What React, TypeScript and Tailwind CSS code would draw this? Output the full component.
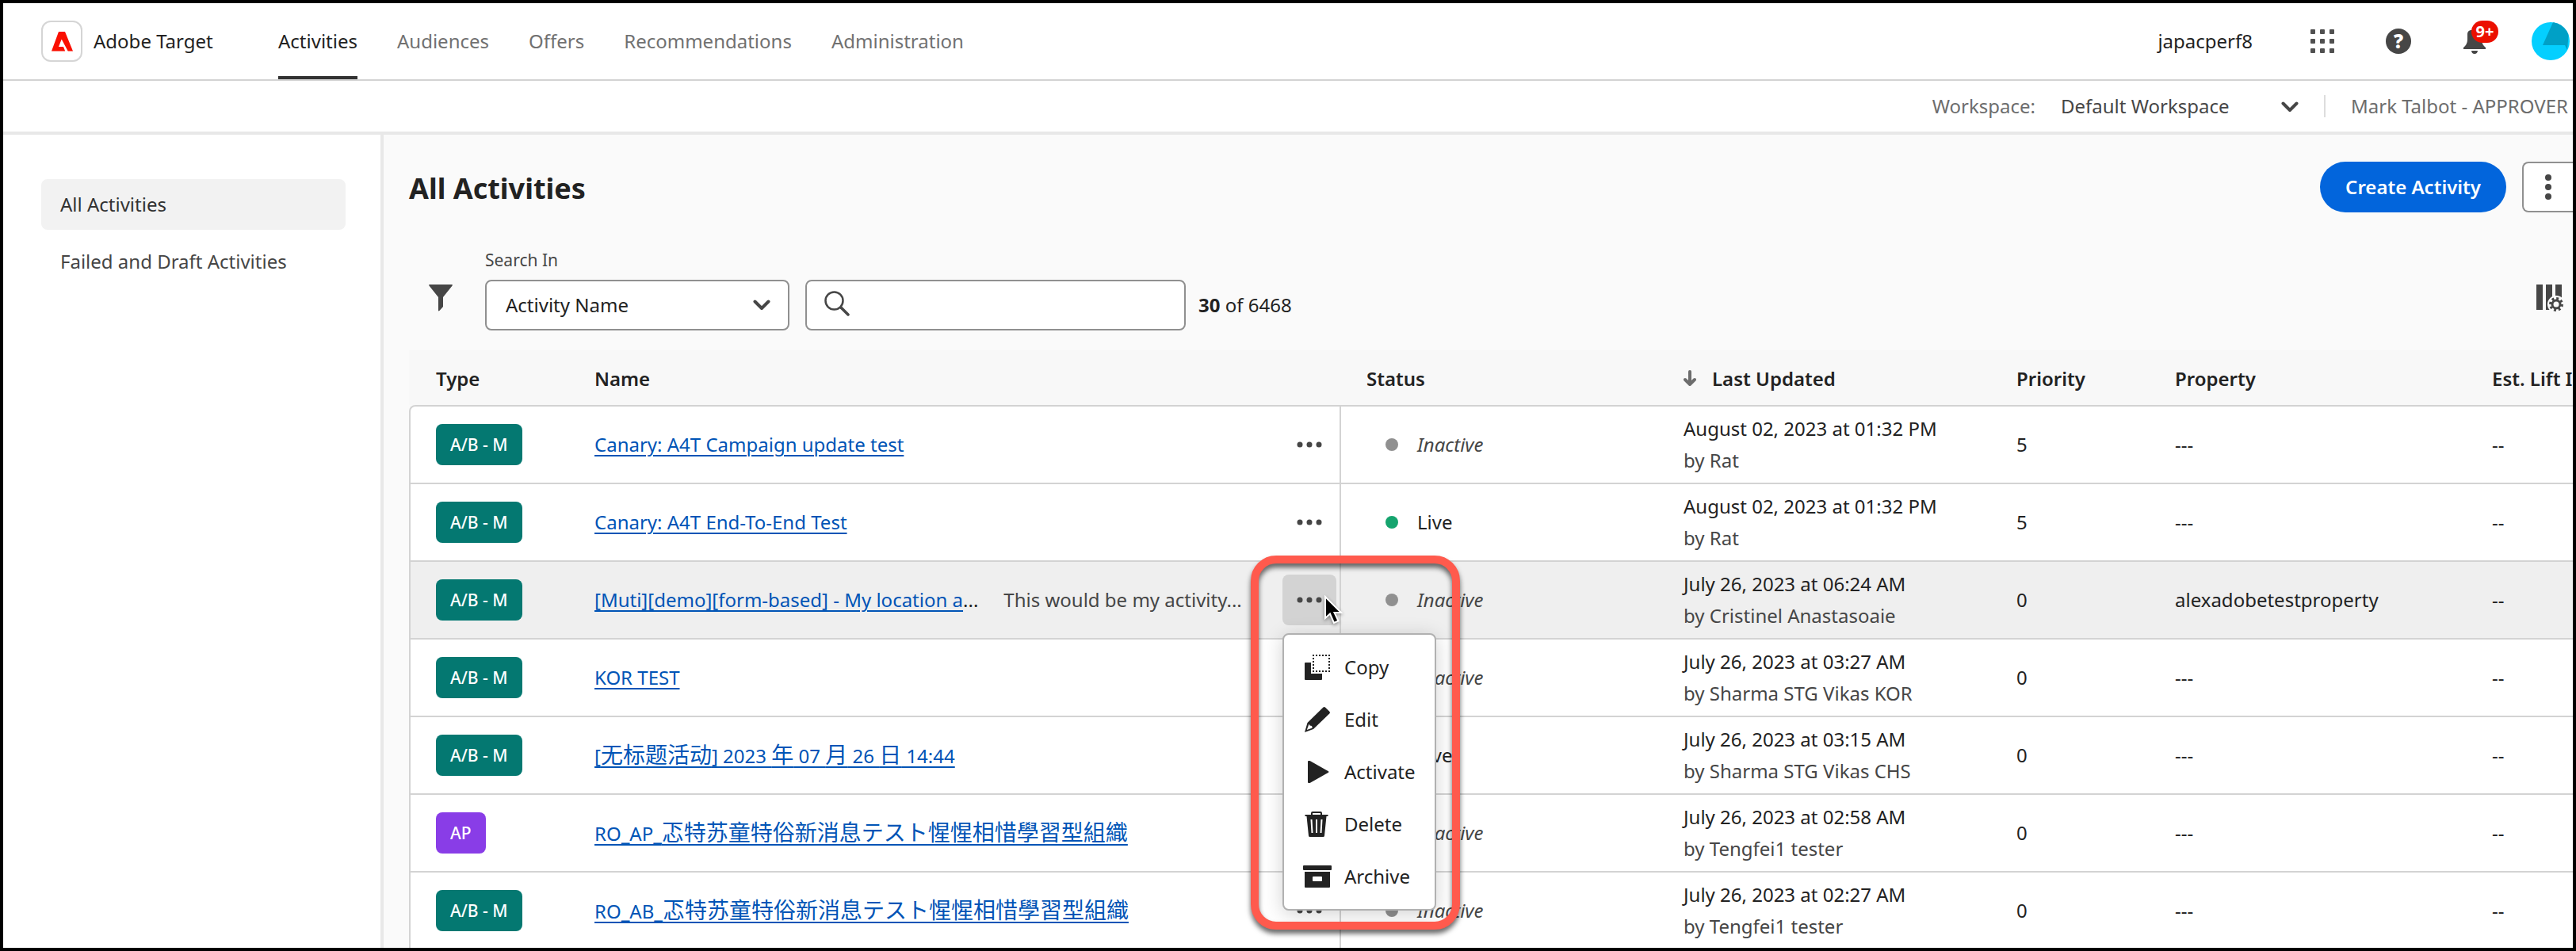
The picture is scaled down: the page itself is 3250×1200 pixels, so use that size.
import type { ReactNode } from "react";

type Status = "Inactive" | "Live";

interface Activity {
  type: "A/B - M" | "AP";
  name: string;
  clipped?: boolean;
  description?: string;
  status: Status;
  date: string;
  author: string;
  priority: number;
  property?: string;
}

const activities: Activity[] = [
  { type: "A/B - M", name: "Canary: A4T Campaign update test", status: "Inactive", date: "August 02, 2023 at 01:32 PM", author: "Rat", priority: 5 },
  { type: "A/B - M", name: "Canary: A4T End-To-End Test", status: "Live", date: "August 02, 2023 at 01:32 PM", author: "Rat", priority: 5 },
  { type: "A/B - M", name: "[Muti][demo][form-based] - My location a", clipped: true, description: "This would be my activity...", status: "Inactive", date: "July 26, 2023 at 06:24 AM", author: "Cristinel Anastasoaie", priority: 0, property: "alexadobetestproperty" },
  { type: "A/B - M", name: "KOR TEST", status: "Inactive", date: "July 26, 2023 at 03:27 AM", author: "Sharma STG Vikas KOR", priority: 0 },
  { type: "A/B - M", name: "[无标题活动] 2023 年 07 月 26 日 14:44", status: "Live", date: "July 26, 2023 at 03:15 AM", author: "Sharma STG Vikas CHS", priority: 0 },
  { type: "AP", name: "RO_AP_忑特苏童特俗新消息テスト惺惺相惜學習型組織", status: "Inactive", date: "July 26, 2023 at 02:58 AM", author: "Tengfei1 tester", priority: 0 },
  { type: "A/B - M", name: "RO_AB_忑特苏童特俗新消息テスト惺惺相惜學習型組織", status: "Inactive", date: "July 26, 2023 at 02:27 AM", author: "Tengfei1 tester", priority: 0 },
];

const OPEN_ROW = 2;

function Chevron({ className }: { className: string }) {
  return (
    <svg viewBox="0 0 22 14" className={className} fill="none" stroke="#464646" strokeWidth="4" strokeLinecap="round" strokeLinejoin="round" aria-hidden="true">
      <path d="M2.5 2.5 11 11l8.500-8.500" />
    </svg>
  );
}

function Dots() {
  return (
    <svg viewBox="0 0 32 8" className="h-2 w-8" fill="#464646" aria-hidden="true">
      <circle cx="4" cy="4" r="3.500" />
      <circle cx="16" cy="4" r="3.500" />
      <circle cx="28" cy="4" r="3.500" />
    </svg>
  );
}

/* East Asian runs are set a little larger than the Latin text beside them. */
function MixedText({ text }: { text: string }) {
  return (
    <>
      {text.split(/([\u3040-\u30ff\u4e00-\u9fff]+)/).map((part, i) =>
        i % 2 ? (
          <span key={i} className="text-[28px]">
            {part}
          </span>
        ) : (
          part
        ),
      )}
    </>
  );
}

const menuItems: { label: string; icon: ReactNode }[] = [
  {
    label: "Copy",
    icon: (
      <>
        <path d="M2 13q0-1 1-1h7v14h14v7q0 1-1 1H3q-1 0-1-1z" />
        <rect x="13" y="3" width="20" height="20" fill="none" stroke="#222" strokeWidth="2" strokeDasharray="2 2" strokeDashoffset="1" />
      </>
    ),
  },
  {
    label: "Edit",
    icon: (
      <path fillRule="evenodd" d="M25.500 2.500q1.200-1 2.400 0l5.600 5.400q1 1.200 0 2.300L13 30 2 34l3.500-12zM7.500 23.500 4.800 31l7-2.500-.8-2.500-2.500-.5z" />
    ),
  },
  { label: "Activate", icon: <path d="M6 5q0-1 1-1h1.500L9.500 4.500 32 17.300q1 .7 0 1.400L9.500 31.500 8.500 32H7q-1 0-1-1z" /> },
  {
    label: "Delete",
    icon: (
      <>
        <path d="M11 6V4q0-1 1-1h10q1 0 1 1v2" fill="none" stroke="#222" strokeWidth="2" />
        <path fillRule="evenodd" d="M2.500 6h29v2h-2L27 32.500q-.2 1.500-1.500 1.500h-17Q7.200 34 7 32.500L4.500 8h-2zM9.500 12l1 17h2l-1-17zm6.500 0v17h2V12zm6.500 0-1 17h2l1-17z" />
      </>
    ),
  },
  {
    label: "Archive",
    icon: (
      <>
        <rect x="0" y="4" width="36" height="6" rx="1" />
        <path fillRule="evenodd" d="M2 12h32v19q0 1-1 1H3q-1 0-1-1zM13 18q-1 0-1 1v4q0 1 1 1h10q1 0 1-1v-4q0-1-1-1z" />
      </>
    ),
  },
];

function RowMenu() {
  return (
    <div role="menu" className="absolute left-0 top-full z-20 mt-2.5 w-[194px] rounded-lg border-2 border-[#b1b1b1] bg-white py-2 shadow-[0_4px_24px_rgba(0,0,0,0.18)]">
      {menuItems.map((item) => (
        <button key={item.label} type="button" role="menuitem" className="flex h-[66px] w-full items-center gap-4 pl-6 text-left text-[#222222]">
          <svg viewBox="0 0 36 36" className="h-9 w-9 shrink-0" fill="#222" aria-hidden="true">
            {item.icon}
          </svg>
          {item.label}
        </button>
      ))}
    </div>
  );
}

function ActivityRow({ activity, index }: { activity: Activity; index: number }) {
  const open = index === OPEN_ROW;
  const cell = "border-t-2 border-[#d3d3d3] p-0 align-middle pl-8";
  return (
    <tr className={open ? "h-[98px] bg-[#efefef]" : "h-[98px] bg-white"}>
      <td className={`${cell} border-l-2 ${index === 0 ? "rounded-tl-lg" : ""}`}>
        <span className={`inline-flex h-[52px] items-center rounded-lg px-[18px] text-[21px] font-medium text-white ${activity.type === "AP" ? "bg-[#893de7]" : "bg-[#047871]"}`}>
          {activity.type}
        </span>
      </td>
      <td className={`${cell} border-r-2 pr-1`}>
        <div className="flex items-center">
          <div className="flex min-w-0 flex-1 items-center gap-8 whitespace-nowrap">
            <span>
              <a href="#activity" className="leading-9 text-[#0054b6] underline decoration-2 underline-offset-4">
                <MixedText text={activity.name} />
              </a>
              {activity.clipped && "..."}
            </span>
            {activity.description && <span className="text-[#464646]">{activity.description}</span>}
          </div>
          <div className="relative">
            <button type="button" aria-label="More actions" aria-expanded={open} className={`flex h-16 w-[68px] items-center justify-center rounded-lg ${open ? "bg-[#d3d3d3]" : ""}`}>
              <Dots />
            </button>
            {open && (
              <>
                <RowMenu />
                <div className="pointer-events-none absolute -left-10 -top-6 z-30 h-[472px] w-[264px] rounded-[32px] border-[10px] border-[#ff5a4d] drop-shadow-[0_5px_3px_rgba(0,0,0,0.6)]" />
                <svg viewBox="0 0 24 38" className="pointer-events-none absolute left-[52px] top-[26px] z-30 h-[38px] w-6 drop-shadow-[0_2px_2px_rgba(0,0,0,0.4)]" aria-hidden="true">
                  <path d="M2 2v27l6-5.500 5 11.500 5.500-2.500-5-10.500H22z" fill="#000" stroke="#fff" strokeWidth="2" />
                </svg>
              </>
            )}
          </div>
        </div>
      </td>
      <td className={cell}>
        <span className="flex items-center pl-6">
          <span className={`mr-6 h-4 w-4 rounded-full ${activity.status === "Live" ? "bg-[#15a46e]" : "bg-[#909090]"}`} />
          <span className={activity.status === "Live" ? "" : "italic text-[#464646]"}>{activity.status}</span>
        </span>
      </td>
      <td className={`${cell} whitespace-nowrap leading-10`}>
        {activity.date}
        <div className="text-[#464646]">by {activity.author}</div>
      </td>
      <td className={cell}>{activity.priority}</td>
      <td className={cell}>{activity.property ?? "---"}</td>
      <td className={cell}>--</td>
    </tr>
  );
}

function Header() {
  const links = ["Activities", "Audiences", "Offers", "Recommendations", "Administration"];
  return (
    <header className="flex h-[98px] shrink-0 items-center border-b-2 border-[#d3d3d3] pl-12 pr-1">
      <div className="flex h-[52px] w-[52px] items-center justify-center rounded-xl border-2 border-[#d5d5d5]">
        <svg viewBox="0 0 27 25" className="h-[25px] w-[27px]" fill="#fa0f00" aria-hidden="true">
          <path d="M9 0h8l10 24.500h-6.300L12.700 9.500 9 19h6l2.200 5.500H0z" />
        </svg>
      </div>
      <span className="ml-3.5 w-[233px]">Adobe Target</span>
      <nav className="flex gap-[50px] self-stretch">
        {links.map((link, i) => (
          <a key={link} href="#nav" className={`flex items-center border-b-4 pt-1 ${i === 0 ? "border-[#323232]" : "border-transparent text-[#717171]"}`}>
            {link}
          </a>
        ))}
      </nav>
      <div className="ml-auto flex items-center gap-12">
        <span className="mr-4">japacperf8</span>
        <button type="button" aria-label="Apps" className="flex h-12 w-12 items-center justify-center">
          <svg viewBox="0 0 30 30" className="h-[30px] w-[30px]" fill="#505050" aria-hidden="true">
            {[0, 12, 24].map((y) => [0, 12, 24].map((x) => <rect key={`${x}-${y}`} x={x} y={y} width="6" height="6" rx="1" />))}
          </svg>
        </button>
        <button type="button" aria-label="Help" className="flex h-12 w-12 items-center justify-center">
          <span className="flex h-8 w-8 items-center justify-center rounded-full bg-[#464646] font-black text-white">?</span>
        </button>
        <button type="button" aria-label="Notifications" className="relative flex h-12 w-12 items-center justify-center">
          <svg viewBox="0 0 28 32" className="h-8 w-7" fill="#464646" aria-hidden="true">
            <path d="M9 2h10q4 1 4 5v7q0 6 5 10v2H0v-2q5-4 5-10V7q0-4 4-5zM10 28h8q-.5 4-4 4t-4-4z" />
          </svg>
          <span className="absolute -top-0.5 left-5 flex h-7 w-[34px] items-center justify-center rounded-full bg-[#eb1000] text-xl font-bold text-white">9+</span>
        </button>
        <button type="button" aria-label="Account" className="h-12 w-12 overflow-hidden rounded-full bg-[#04cfff]">
          <svg viewBox="0 0 48 48" className="h-12 w-12" aria-hidden="true">
            <path d="M27 0 14 29h28l3 6 3-35z" fill="#00a0c6" />
          </svg>
        </button>
      </div>
    </header>
  );
}

export default function App() {
  return (
    <div className="flex h-screen flex-col overflow-hidden border-4 border-black bg-white font-['Noto_Sans','Noto_Sans_CJK_SC',sans-serif] text-2xl leading-8 text-[#222222]">
      <Header />
      <div className="flex h-[68px] shrink-0 items-center justify-end gap-8 border-b-4 border-[#e8e8e8] text-[#6d6d6d]">
        <label htmlFor="workspace">Workspace:</label>
        <div className="relative">
          <select id="workspace" className="w-[300px] appearance-none bg-transparent text-[#464646]">
            <option>Default Workspace</option>
          </select>
          <Chevron className="pointer-events-none absolute right-0 top-2.5 h-3.5 w-[22px]" />
        </div>
        <div className="h-7 w-0.5 bg-[#dddddd]" />
        <span className="w-[280px] overflow-hidden whitespace-nowrap">Mark Talbot - APPROVER</span>
      </div>

      <div className="flex min-h-0 flex-1">
        <aside className="flex w-[480px] shrink-0 flex-col gap-2 border-r-4 border-[#e8e8e8] pl-12 pr-11 pt-14">
          <a href="#all" className="flex h-16 items-center rounded-lg bg-[#f2f2f2] px-6 text-[#323232]">
            All Activities
          </a>
          <a href="#drafts" className="flex h-16 items-center whitespace-nowrap px-6 text-[#464646]">
            Failed and Draft Activities
          </a>
        </aside>

        <main className="min-w-0 flex-1 overflow-hidden bg-[#fafafa] pl-8 pt-[34px]">
          <div className="flex items-center">
            <h1 className="mr-auto pt-1 text-4xl font-bold">All Activities</h1>
            <button type="button" className="h-16 rounded-full bg-[#0265dc] px-8 font-semibold text-white">
              Create Activity
            </button>
            <button type="button" aria-label="More options" className="ml-5 flex h-16 w-16 items-center justify-center rounded-l-lg border-2 border-r-0 border-[#909090] bg-white">
              <svg viewBox="0 0 8 32" className="h-8 w-2" fill="#464646" aria-hidden="true">
                <circle cx="4" cy="4" r="4" />
                <circle cx="4" cy="16" r="4" />
                <circle cx="4" cy="28" r="4" />
              </svg>
            </button>
          </div>

          <div className="mt-11 flex items-end">
            <button type="button" aria-label="Filter" className="mb-[9px] ml-2 mr-6 flex h-16 w-16 items-center justify-center">
              <svg viewBox="0 0 32 34" className="h-[34px] w-8" fill="#464646" aria-hidden="true">
                <path d="M2 0h28q1.500 0 .6 1.400L19 16v12l-4.500 5Q13 34 13 32.500V16L1.400 1.400Q.5 0 2 0z" />
              </svg>
            </button>
            <div>
              <label htmlFor="search-in" className="mb-[9px] block text-[21px] text-[#464646]">
                Search In
              </label>
              <div className="relative">
                <select id="search-in" className="h-16 w-[384px] appearance-none rounded-lg border-2 border-[#909090] bg-white px-6">
                  <option>Activity Name</option>
                </select>
                <Chevron className="pointer-events-none absolute right-6 top-[25px] h-3.5 w-[22px]" />
              </div>
            </div>
            <div className="relative ml-5">
              <input type="search" aria-label="Search activities" className="block h-16 w-[480px] rounded-lg border-2 border-[#909090] bg-white pl-16" />
              <svg viewBox="0 0 32 32" className="pointer-events-none absolute left-6 top-[14px] h-8 w-8" fill="none" stroke="#464646" strokeLinecap="round" aria-hidden="true">
                <circle cx="12.500" cy="12.500" r="11" strokeWidth="2.500" />
                <path d="m21 21 9 9" strokeWidth="3.500" />
              </svg>
            </div>
            <p className="ml-4 flex h-16 items-center whitespace-pre">
              <b>30</b> of 6468
            </p>
            <button type="button" aria-label="Customize table" className="mb-[9px] ml-auto flex h-16 w-[58px] items-center justify-center">
              <svg viewBox="0 0 34 34" className="h-[34px] w-[34px]" aria-hidden="true">
                <path d="M0 0h8v32H0zM12 0h8v32h-8zM24 0h8v32h-8z" fill="#464646" />
                <circle cx="25" cy="25" r="11" fill="#fafafa" />
                <circle cx="25" cy="25" r="5" fill="none" stroke="#464646" strokeWidth="3" />
                <circle cx="25" cy="25" r="7.500" fill="none" stroke="#464646" strokeWidth="3" strokeDasharray="2.900 2.990" />
              </svg>
            </button>
          </div>

          <table className="mt-[25px] w-full table-fixed border-separate border-spacing-0">
            <colgroup>
              <col className="w-[202px]" />
              <col />
              <col className="w-[400px]" />
              <col className="w-[420px]" />
              <col className="w-[200px]" />
              <col className="w-[400px]" />
              <col className="w-[134px]" />
            </colgroup>
            <thead>
              <tr className="h-[69px] whitespace-nowrap bg-[#f8f8f8] text-left">
                <th className="p-0 pl-[34px] pt-0.5 font-semibold">Type</th>
                <th className="p-0 pl-8 pt-0.5 font-semibold">Name</th>
                <th className="p-0 pl-8 pt-0.5 font-semibold">Status</th>
                <th className="p-0 pl-8 pt-0.5 font-semibold">
                  <span className="flex items-center gap-5">
                    <svg viewBox="0 0 16 22" className="h-[22px] w-4" fill="none" stroke="#6d6d6d" strokeWidth="4" strokeLinecap="round" strokeLinejoin="round" aria-hidden="true">
                      <path d="M8 2v16M2 12l6 6 6-6" />
                    </svg>
                    Last Updated
                  </span>
                </th>
                <th className="p-0 pl-8 pt-0.5 font-semibold">Priority</th>
                <th className="p-0 pl-8 pt-0.5 font-semibold">Property</th>
                <th className="overflow-hidden p-0 pl-8 pt-0.5 font-semibold">Est. Lift I</th>
              </tr>
            </thead>
            <tbody>
              {activities.map((activity, i) => (
                <ActivityRow key={activity.name} activity={activity} index={i} />
              ))}
            </tbody>
          </table>
        </main>
      </div>
    </div>
  );
}
